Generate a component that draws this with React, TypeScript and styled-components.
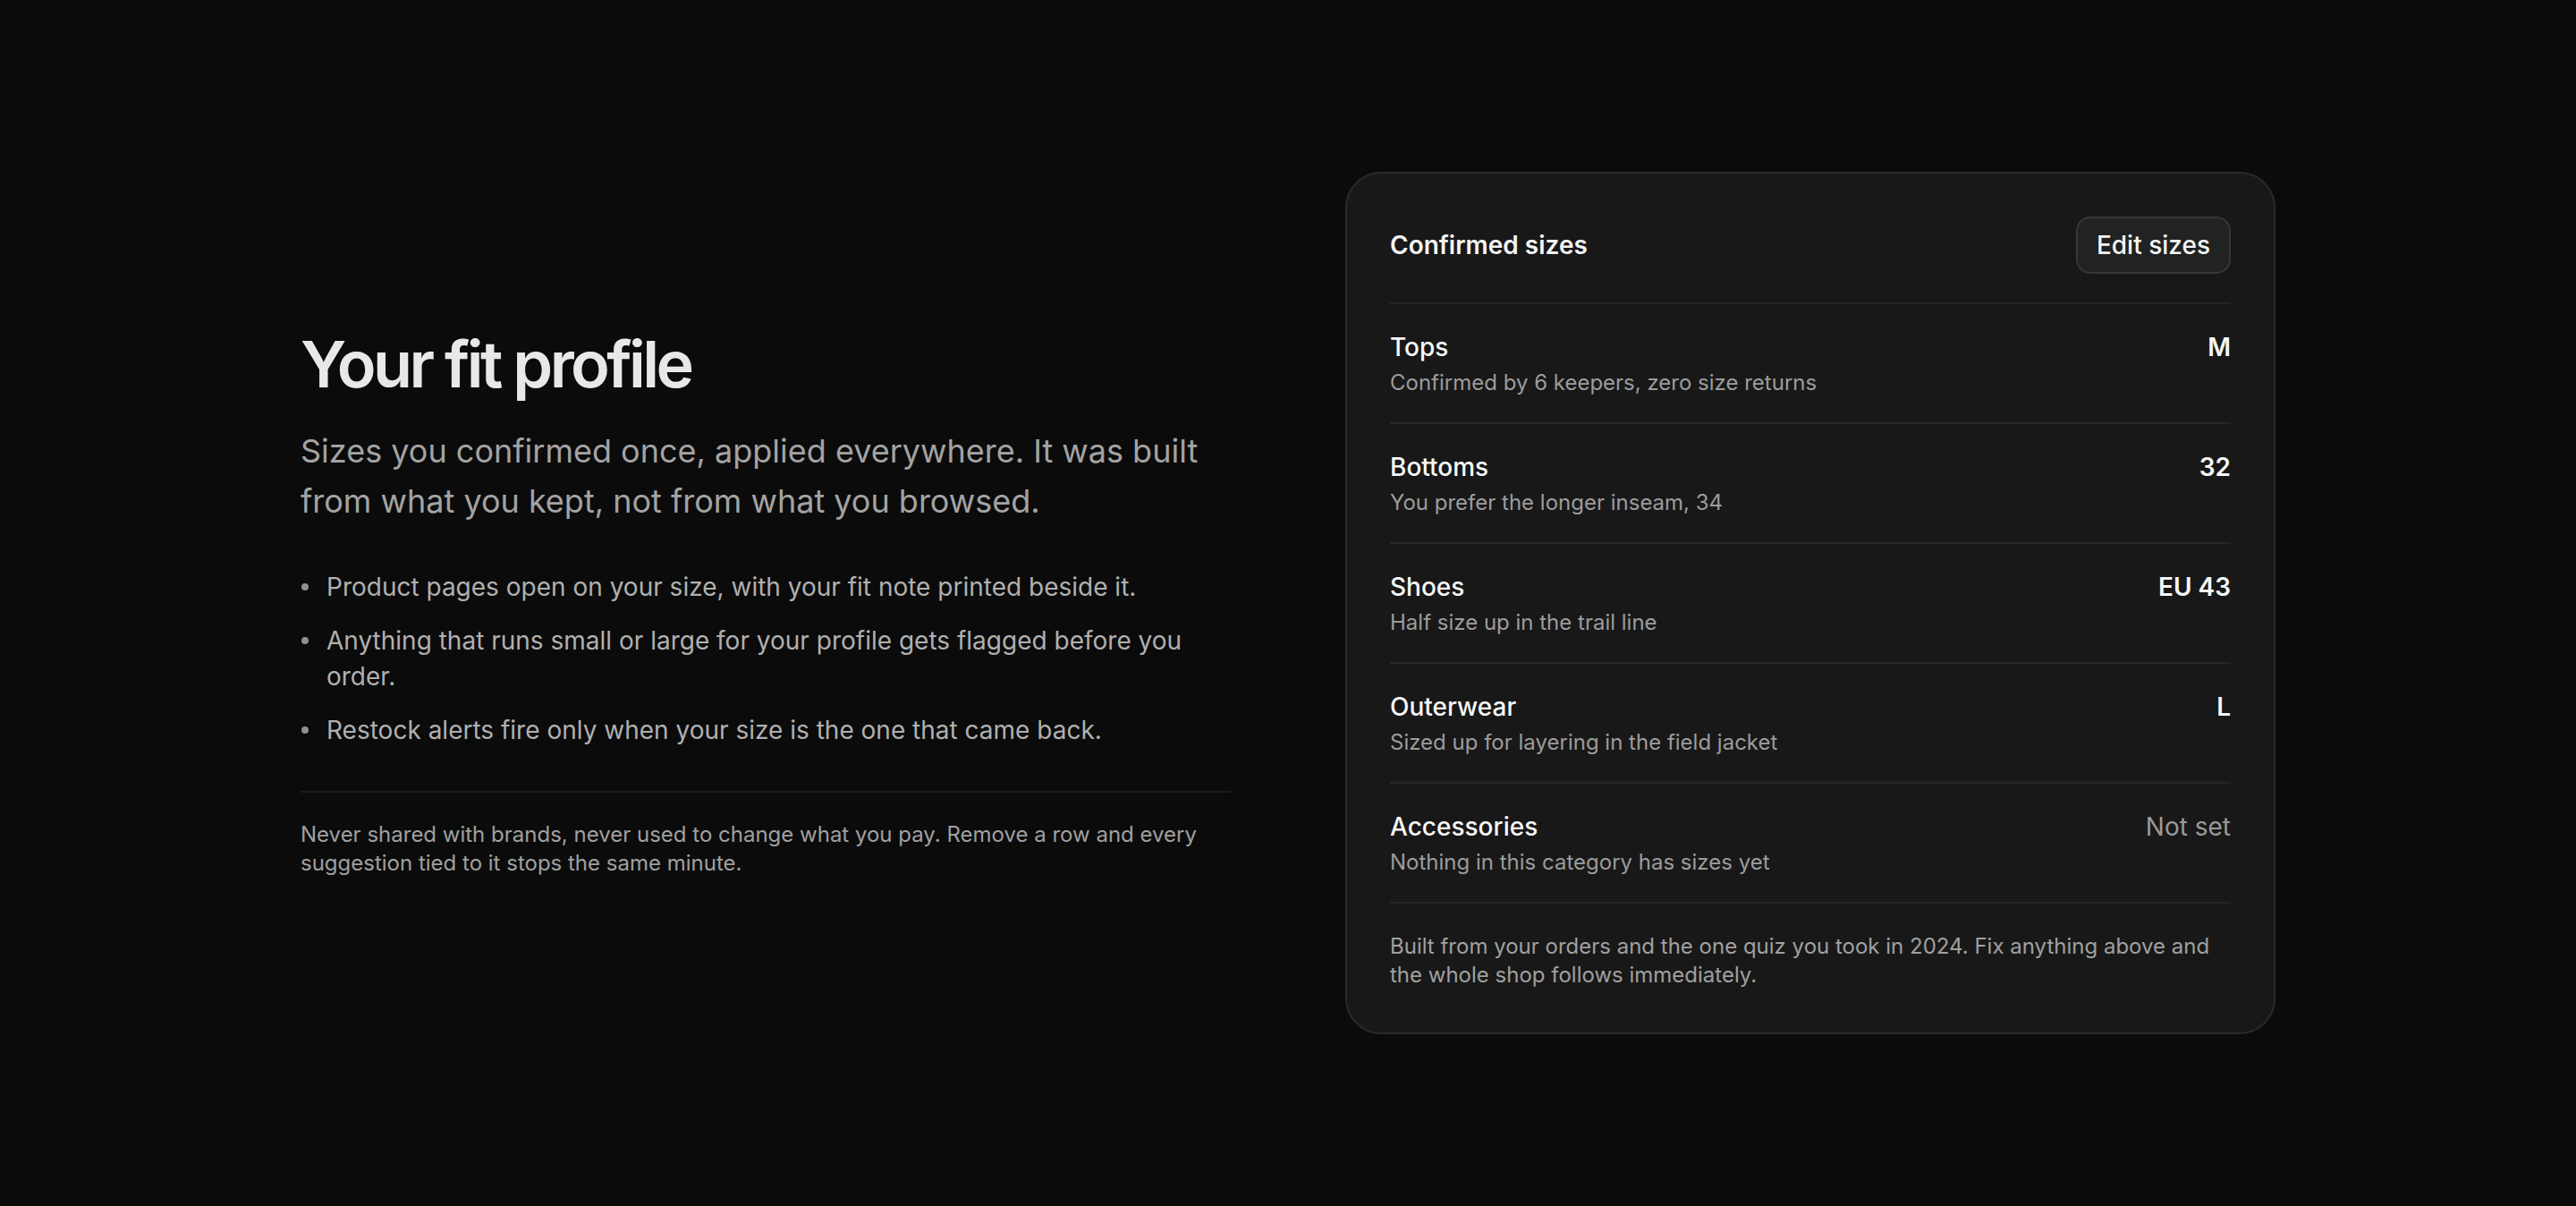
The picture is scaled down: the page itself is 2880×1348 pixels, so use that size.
import styled, { createGlobalStyle } from "styled-components";

const GlobalStyle = createGlobalStyle`
  * {
    box-sizing: border-box;
  }

  html,
  body {
    margin: 0;
    padding: 0;
    background: #0b0b0b;
  }

  body {
    font-family: Inter, "Noto Sans", "Liberation Sans", sans-serif;
    color: #ededed;
    -webkit-font-smoothing: antialiased;
  }
`;

const Page = styled.main`
  min-height: 100vh;
  display: flex;
  align-items: center;
  justify-content: center;
`;

const Layout = styled.div`
  width: 2208px;
  display: grid;
  grid-template-columns: 1040px 1040px;
  gap: 128px;
  align-items: center;
`;

const Intro = styled.section`
  display: flex;
  flex-direction: column;
`;

const Heading = styled.h1`
  margin: 0;
  font-size: 72px;
  line-height: 78px;
  font-weight: 600;
  letter-spacing: -0.05em;
  color: #e8e8e8;
`;

const Lead = styled.p`
  margin: 30px 0 0;
  font-size: 36px;
  line-height: 56px;
  font-weight: 400;
  color: #a3a3a3;
`;

const Points = styled.ul`
  margin: 48px 0 0;
  padding: 0;
  list-style: none;
  display: flex;
  flex-direction: column;
  gap: 20px;
`;

const Point = styled.li`
  display: flex;
  align-items: flex-start;
  font-size: 28px;
  line-height: 40px;
  color: #b0b0b0;
`;

const Dot = styled.span`
  flex: none;
  width: 8px;
  height: 8px;
  margin: 16px 20px 0 1px;
  border-radius: 50%;
  background: #909090;
`;

const Footnote = styled.p`
  margin: 48px 0 0;
  padding-top: 31px;
  border-top: 2px solid #1c1c1c;
  font-size: 24px;
  line-height: 32px;
  color: #a0a0a0;
`;

const Card = styled.section`
  background: #181818;
  border: 2px solid #2a2a2a;
  border-radius: 40px;
  padding: 48px;
`;

const CardHeader = styled.header`
  display: flex;
  align-items: center;
  justify-content: space-between;
  padding-bottom: 32px;
  border-bottom: 2px solid #262626;
`;

const CardTitle = styled.h2`
  margin: 0;
  font-size: 28px;
  line-height: 40px;
  font-weight: 600;
  color: #f4f4f4;
`;

const EditButton = styled.button`
  font-family: inherit;
  font-size: 28px;
  line-height: 40px;
  font-weight: 500;
  color: #f6f6f6;
  background: #212222;
  border: 2px solid #373737;
  border-radius: 16px;
  padding: 10px 21px;
  cursor: pointer;
`;

const SizeList = styled.div`
  display: flex;
  flex-direction: column;
`;

const SizeRow = styled.div`
  display: flex;
  justify-content: space-between;
  align-items: flex-start;
  gap: 32px;
  padding: 28px 0;
  border-bottom: 2px solid #262626;
`;

const RowText = styled.div`
  display: flex;
  flex-direction: column;
  gap: 4px;
`;

const RowName = styled.span`
  font-size: 28px;
  line-height: 40px;
  font-weight: 500;
  color: #f7f7f7;
`;

const RowNote = styled.span`
  font-size: 24px;
  line-height: 32px;
  color: #9c9c9c;
`;

const RowValue = styled.span<{ $empty?: boolean }>`
  font-size: 28px;
  line-height: 40px;
  font-weight: ${({ $empty }) => ($empty ? 400 : 600)};
  color: ${({ $empty }) => ($empty ? "#9a9a9a" : "#f7f7f7")};
  white-space: nowrap;
`;

const CardFooter = styled.p`
  margin: 0;
  padding-top: 32px;
  font-size: 24px;
  line-height: 32px;
  color: #a0a0a0;
`;

const sizes = [
  { name: "Tops", note: "Confirmed by 6 keepers, zero size returns", value: "M" },
  { name: "Bottoms", note: "You prefer the longer inseam, 34", value: "32" },
  { name: "Shoes", note: "Half size up in the trail line", value: "EU 43" },
  { name: "Outerwear", note: "Sized up for layering in the field jacket", value: "L" },
  { name: "Accessories", note: "Nothing in this category has sizes yet", value: null },
];

const points = [
  "Product pages open on your size, with your fit note printed beside it.",
  "Anything that runs small or large for your profile gets flagged before you order.",
  "Restock alerts fire only when your size is the one that came back.",
];

const App = () => {
  return (
    <>
      <GlobalStyle />
      <Page>
        <Layout>
          <Intro>
            <Heading>Your fit profile</Heading>
            <Lead>
              Sizes you confirmed once, applied everywhere. It was built from
              what you kept, not from what you browsed.
            </Lead>
            <Points>
              {points.map((point) => (
                <Point key={point}>
                  <Dot />
                  <span>{point}</span>
                </Point>
              ))}
            </Points>
            <Footnote>
              Never shared with brands, never used to change what you pay.
              Remove a row and every suggestion tied to it stops the same
              minute.
            </Footnote>
          </Intro>

          <Card>
            <CardHeader>
              <CardTitle>Confirmed sizes</CardTitle>
              <EditButton type="button">Edit sizes</EditButton>
            </CardHeader>
            <SizeList>
              {sizes.map((size) => (
                <SizeRow key={size.name}>
                  <RowText>
                    <RowName>{size.name}</RowName>
                    <RowNote>{size.note}</RowNote>
                  </RowText>
                  <RowValue $empty={!size.value}>
                    {size.value ?? "Not set"}
                  </RowValue>
                </SizeRow>
              ))}
            </SizeList>
            <CardFooter>
              Built from your orders and the one quiz you took in 2024. Fix
              anything above and the whole shop follows immediately.
            </CardFooter>
          </Card>
        </Layout>
      </Page>
    </>
  );
};

export default App;
